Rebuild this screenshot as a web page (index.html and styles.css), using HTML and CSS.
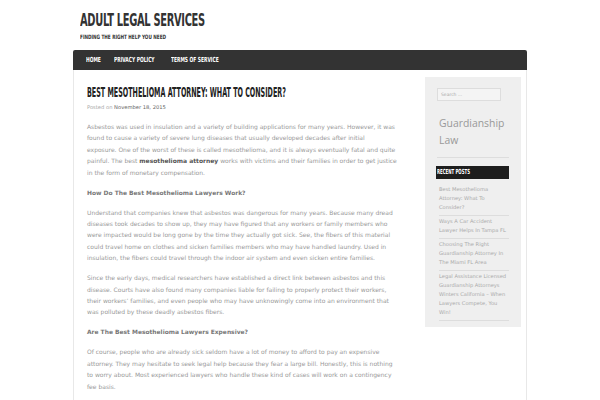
FILE: index.html
```html
<!DOCTYPE html>
<html>
<head>
<meta charset="utf-8">
<link rel="stylesheet" href="styles.css">
</head>
<body>
<header class="site-header">
  <h1 class="site-title"><span class="cond">ADULT LEGAL SERVICES</span></h1>
  <p class="site-desc"><span class="cond">FINDING THE RIGHT HELP YOU NEED</span></p>
</header>
<div class="wrap">
  <nav class="menu">
    <a class="menu-item m-home"><span class="cond">HOME</span></a>
    <a class="menu-item m-privacy"><span class="cond">PRIVACY POLICY</span></a>
    <a class="menu-item m-terms"><span class="cond">TERMS OF SERVICE</span></a>
  </nav>
  <div class="content">
    <main class="main">
      <h2 class="post-title"><span class="cond">BEST MESOTHELIOMA ATTORNEY: WHAT TO CONSIDER?</span></h2>
      <p class="meta">Posted on <span class="date">November 18, 2015</span></p>
      <p class="para">Asbestos was used in insulation and a variety of building applications for many years. However, it was found to cause a variety of severe lung diseases that usually developed decades after initial<br>exposure. One of the worst of these is called mesothelioma, and it is always eventually fatal and quite painful. The best <b class="link">mesothelioma attorney</b> works with victims and their families in order to get justice in the form of monetary compensation.</p>
      <p class="sub">How Do The Best Mesothelioma Lawyers Work?</p>
      <p class="para">Understand that companies knew that asbestos was dangerous for many years. Because many dread diseases took decades to show up, they may have figured that any workers or family members who were impacted would be long gone by the time they actually got sick. See, the fibers of this material could travel home on clothes and sicken families members who may have handled laundry. Used in insulation, the fibers could travel through the indoor air system and even sicken entire families.</p>
      <p class="para">Since the early days, medical researchers have established a direct link between asbestos and this disease. Courts have also found many companies liable for failing to properly protect their workers, their workers’ families, and even people who may have unknowingly come into an environment that was polluted by these deadly asbestos fibers.</p>
      <p class="sub">Are The Best Mesothelioma Lawyers Expensive?</p>
      <p class="para">Of course, people who are already sick seldom have a lot of money to afford to pay an expensive attorney. They may hesitate to seek legal help because they fear a large bill. Honestly, this is nothing to worry about. Most experienced lawyers who handle these kind of cases will work on a contingency fee basis.</p>
    </main>
    <aside class="sidebar">
      <div class="search">Search ...</div>
      <p class="guard">Guardianship Law</p>
      <h3 class="widget-title"><span class="cond">RECENT POSTS</span></h3>
      <ul class="recent">
        <li>Best Mesothelioma Attorney: What To Consider?</li>
        <li>Ways A Car Accident Lawyer Helps In Tampa FL</li>
        <li>Choosing The Right Guardianship Attorney In The Miami FL Area</li>
        <li>Legal Assistance Licensed Guardianship Attorneys Winters California – When Lawyers Compete, You Win!</li>
      </ul>
    </aside>
  </div>
</div>
</body>
</html>
```
FILE: styles.css
```css
html, body {
  margin: 0;
  padding: 0;
  background: #ffffff;
  font-family: "DejaVu Sans", Verdana, sans-serif;
}
.cond {
  display: inline-block;
  font-family: "DejaVu Sans Condensed", "DejaVu Sans", sans-serif;
  font-weight: bold;
  transform-origin: left center;
  white-space: nowrap;
}
.site-header {
  padding: 10px 0 0 80px;
  height: 40px;
  box-sizing: border-box;
}
.site-title {
  margin: 0;
  font-size: 18px;
  line-height: 20px;
  color: #333;
  font-weight: normal;
}
.site-title .cond {
  transform: scaleX(0.61);
  letter-spacing: -0.5px;
}
.site-desc {
  margin: 3px 0 0;
  font-size: 6px;
  line-height: 8px;
  color: #333;
}
.site-desc .cond {
  transform: scaleX(0.78);
}
.wrap {
  width: 454px;
  margin: 10px auto 0;
}
.menu {
  height: 20px;
  background: #333333;
  border-radius: 2px 2px 0 0;
  display: flex;
  align-items: center;
  padding-left: 13px;
}
.menu-item {
  display: block;
  color: #fff;
  font-size: 7px;
  line-height: 8px;
  overflow: visible;
  white-space: nowrap;
}
.menu-item .cond {
  transform: scaleX(0.7);
}
.m-home { width: 28px; }
.m-privacy { width: 57px; }
.m-terms { width: 60px; }
.content {
  display: flex;
  border: 1px solid #e8e8e8;
  border-top: none;
  padding: 7px 6px 20px 13px;
  height: 340px;
  box-sizing: border-box;
}
.main {
  width: 311px;
  flex: none;
  padding-top: 8px;
}
.post-title {
  margin: 0;
  font-size: 13.5px;
  line-height: 14px;
  height: 14px;
  color: #222;
  font-weight: normal;
  white-space: nowrap;
}
.post-title .cond {
  transform: scaleX(0.526);
}
.meta {
  margin: 4px 0 0;
  font-size: 5.2px;
  line-height: 8px;
  color: #aaa;
}
.meta .date {
  color: #666;
}
.para {
  margin: 8.6px 0 0;
  font-size: 6px;
  line-height: 11.4px;
  color: #999;
}
.meta + .para {
  margin-top: 10px;
}
.link {
  color: #555;
  font-weight: bold;
}
.sub {
  margin: 8.6px 0 0;
  font-size: 5.95px;
  line-height: 11.4px;
  color: #777;
  font-weight: bold;
}
.sidebar {
  width: 96px;
  flex: none;
  margin-left: 27px;
  background: #efefef;
  padding: 11px 12px 6px;
  box-sizing: border-box;
  align-self: flex-start;
}
.search {
  width: 64px;
  height: 13px;
  border: 1px solid #ddd;
  background: #f4f4f4;
  box-sizing: border-box;
  font-size: 4.5px;
  line-height: 11px;
  padding-left: 3px;
  color: #aaa;
}
.guard {
  margin: 14px 0 0 0;
  padding-left: 2px;
  font-family: "Open Sans", "DejaVu Sans", sans-serif;
  font-size: 10.4px;
  line-height: 17px;
  color: #999;
  padding-bottom: 8px;
  border-bottom: 1px solid #ddd;
}
.widget-title {
  margin: 8px 0 0 -1px;
  background: #1d1d1d;
  color: #fff;
  height: 13px;
  width: 73px;
  font-size: 7px;
  line-height: 13px;
  font-weight: normal;
  padding-left: 1px;
  box-sizing: border-box;
}
.widget-title .cond {
  transform: scaleX(0.62);
}
.recent {
  list-style: none;
  margin: 5px 0 0;
  padding: 0 0 0 2px;
}
.recent li {
  font-size: 5.15px;
  line-height: 9px;
  color: #aaa;
  padding: 1px 0 3px;
  border-bottom: 1px solid #ddd;
}
```
